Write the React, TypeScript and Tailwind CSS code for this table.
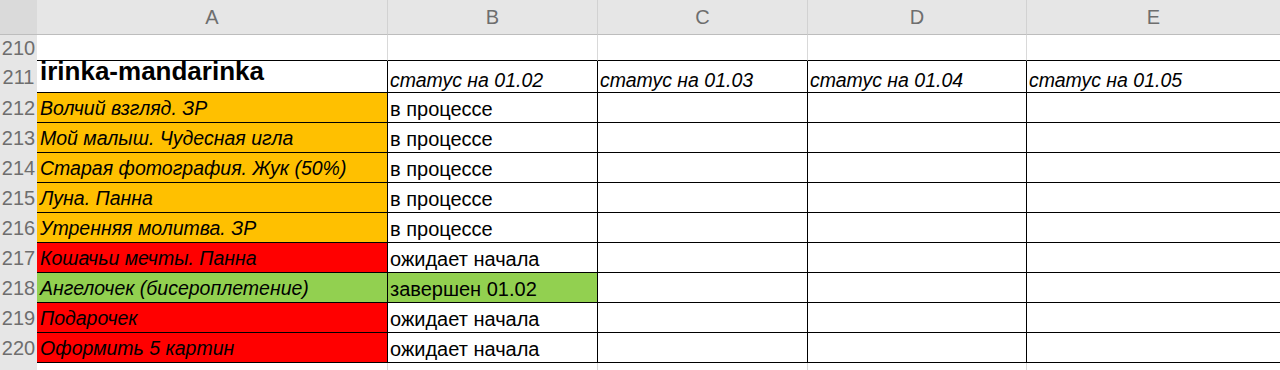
const rows = [
  { n: 212, task: "Волчий взгляд. ЗР", fill: "orange", status: "в процессе" },
  { n: 213, task: "Мой малыш. Чудесная игла", fill: "orange", status: "в процессе" },
  { n: 214, task: "Старая фотография. Жук (50%)", fill: "orange", status: "в процессе" },
  { n: 215, task: "Луна. Панна", fill: "orange", status: "в процессе" },
  { n: 216, task: "Утренняя молитва. ЗР", fill: "orange", status: "в процессе" },
  { n: 217, task: "Кошачьи мечты. Панна", fill: "red", status: "ожидает начала" },
  { n: 218, task: "Ангелочек (бисероплетение)", fill: "green", status: "завершен 01.02" },
  { n: 219, task: "Подарочек", fill: "red", status: "ожидает начала" },
  { n: 220, task: "Оформить 5 картин", fill: "red", status: "ожидает начала" },
];

const fills: Record<string, string> = {
  orange: "bg-[#ffc000]",
  red: "bg-[#ff0000]",
  green: "bg-[#92d050]",
};

const cols = ["A", "B", "C", "D", "E"];
const dates = ["01.02", "01.03", "01.04", "01.05"];

const RowNum = ({ n }: { n: number }) => (
  <div className="flex items-center justify-center bg-[#e6e6e6] text-[20px] text-[#6e6e6e]">
    {n}
  </div>
);

const App = () => {
  return (
    <div className="h-[370px] w-[1280px] overflow-hidden bg-white font-['Liberation_Sans',Arial,sans-serif] text-black">
      <div className="grid grid-cols-[37px_351px_210px_210px_219px_1fr] grid-rows-[35px_26px_32px_repeat(10,30px)]">
        {/* column letters */}
        <div className="border-b border-[#bdbdbd] bg-[#dadada]" />
        {cols.map((c, i) => (
          <div
            key={c}
            className={`flex items-center justify-center border-b border-[#bdbdbd] bg-[#e6e6e6] text-[20px] text-[#6e6e6e] ${
              i < 4 ? "border-r border-r-[#d2d2d2]" : ""
            }`}
          >
            {c}
          </div>
        ))}

        {/* 210 */}
        <RowNum n={210} />
        {cols.map((c, i) => (
          <div
            key={c}
            className={`border-b border-b-black ${i < 4 ? "border-r border-r-[#d9d9d9]" : ""}`}
          />
        ))}

        {/* 211 */}
        <RowNum n={211} />
        <div className="flex items-end border-b border-r border-black pb-[8px] pl-[3px] text-[26px] font-bold leading-none">
          irinka-mandarinka
        </div>
        {dates.map((d, i) => (
          <div
            key={d}
            className={`flex items-end border-b border-black pb-[2px] pl-[2px] text-[19.5px] italic leading-none ${
              i < 3 ? "border-r" : ""
            }`}
          >
            статус на {d}
          </div>
        ))}

        {rows.map((r) => (
          <div key={r.n} className="contents">
            <RowNum n={r.n} />
            <div
              className={`flex items-center border-b border-r border-black pl-[3px] pt-[3px] text-[19.5px] italic leading-none ${fills[r.fill]}`}
            >
              {r.task}
            </div>
            <div
              className={`flex items-center border-b border-r border-black pl-[2px] pt-[3px] text-[20px] leading-none ${
                r.fill === "green" ? "bg-[#92d050]" : ""
              }`}
            >
              {r.status}
            </div>
            <div className="border-b border-r border-black" />
            <div className="border-b border-r border-black" />
            <div className="border-b border-black" />
          </div>
        ))}

        {/* 221 */}
        <RowNum n={221} />
        {cols.map((c, i) => (
          <div key={c} className={i < 4 ? "border-r border-[#d9d9d9]" : ""} />
        ))}
      </div>
    </div>
  );
};

export default App;
